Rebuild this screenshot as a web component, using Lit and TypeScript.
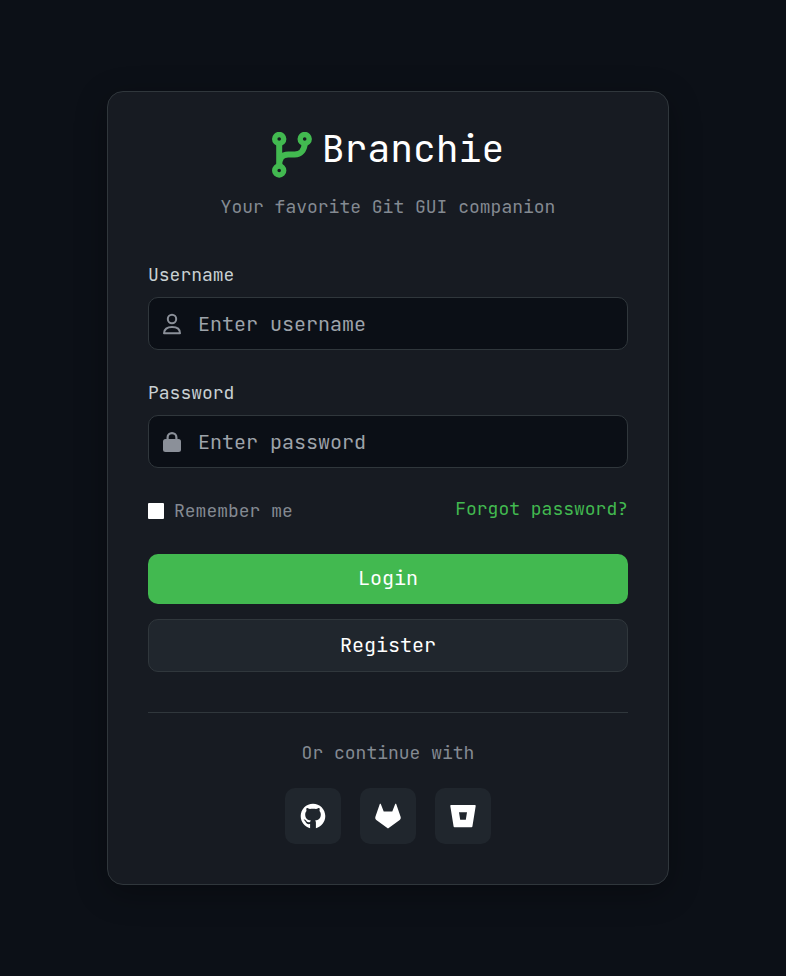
import { LitElement, html, css, svg } from "lit";
import { customElement } from "lit/decorators.js";

const branchIcon = svg`<svg class="logo" viewBox="0 0 40 46" fill="none" stroke="currentColor" aria-hidden="true">
  <g stroke-width="5.400"><circle cx="7.200" cy="7" r="4.500"/><circle cx="32.700" cy="7" r="4.500"/><circle cx="7.200" cy="38.500" r="4.500"/></g>
  <path stroke-width="6" d="M7.200 11.500V34M7.200 34c0-8 3-11.500 9-11.500h6.500c6 0 9.500-4.500 10-10.500"/>
</svg>`;

const userIcon = svg`<svg class="field-icon" viewBox="0 0 20 22" fill="none" stroke="currentColor" stroke-width="2" aria-hidden="true">
  <circle cx="10" cy="6" r="4.200"/>
  <path stroke-linejoin="round" d="M2 20.300c0-4 3.200-6.300 8-6.300s8 2.300 8 6.300z"/>
</svg>`;

const lockIcon = svg`<svg class="field-icon" viewBox="0 0 20 22" aria-hidden="true">
  <rect x="1" y="8" width="18" height="13" rx="2.500" fill="currentColor"/>
  <path fill="none" stroke="currentColor" stroke-width="2.200" d="M5.600 9.500V6.500a4.400 4.400 0 0 1 8.800 0V9.500"/>
</svg>`;

const githubIcon = svg`<svg viewBox="0 0 26 26" aria-hidden="true">
  <path fill="currentColor" fill-rule="evenodd" d="M10.100 25.200C4.700 23.900.7 19 .7 13.100.7 6.200 6.200.7 13 .7s12.300 5.500 12.300 12.400c0 5.900-4 10.800-9.400 12.100v-5.400c0-1.200-.3-1.900-.8-2.400 3.600-.4 5.700-2.100 5.700-6 0-1.600-.5-2.700-1.300-3.500.3-1 .3-2-.1-3-1.300 0-2.500.6-3.300 1.200-2-.5-4.200-.5-6.200 0-.8-.6-2-1.200-3.300-1.200-.4 1-.4 2-.1 3-.8.800-1.300 1.900-1.300 3.500 0 3.900 2.100 5.600 5.700 6-.4.400-.7.900-.8 1.600-2.500.9-3.400-.5-4.100-1.500-.5-.7-1.100-1.100-1.900-1-.6.100-.3.500.1.700.7.400 1 .9 1.400 1.800.6 1.500 2 2.600 4.500 2.100z"/>
</svg>`;

const gitlabIcon = svg`<svg viewBox="0 0 26 26" fill="currentColor" aria-hidden="true">
  <path d="M13 25.500 1.300 17C.3 16.200 0 15 .4 13.800L4.700 1.200c.2-.6 1-.6 1.200 0L8.700 8.600h8.600l2.800-7.400c.2-.6 1-.6 1.200 0l4.300 12.600c.4 1.200.1 2.400-.9 3.200z"/>
</svg>`;

const bitbucketIcon = svg`<svg viewBox="0 0 26 26" fill="currentColor" aria-hidden="true">
  <path fill-rule="evenodd" d="M1 2h24c.5 0 .8.400.7.900L22.400 23.400c-.1.500-.4.800-.9.800h-17c-.5 0-.8-.3-.9-.8L.3 2.900C.2 2.400.5 2 1 2zM9 9.300 10.200 16.800h5.600L17 9.300z"/>
</svg>`;

const providers = [
  { name: "GitHub", icon: githubIcon },
  { name: "GitLab", icon: gitlabIcon },
  { name: "Bitbucket", icon: bitbucketIcon },
];

@customElement("app-root")
export class AppRoot extends LitElement {
  static styles = css`
    :host {
      display: flex;
      align-items: center;
      justify-content: center;
      min-height: 100vh;
      box-sizing: border-box;
      padding: 40px 30px 40px 20px;
      background: #0c1017;
      color: #fff;
      font: 18px/24px "JetBrains Mono", "DejaVu Sans Mono", monospace;
    }
    * { box-sizing: border-box; }
    .card {
      width: 100%;
      max-width: 562px;
      padding: 40px;
      border: 1px solid #30373c;
      border-radius: 16px;
      background: #171b22;
      box-shadow: 0 8px 32px rgba(0, 0, 0, 0.3);
    }
    header { text-align: center; margin-bottom: 46px; }
    .brand { display: flex; justify-content: center; gap: 10px; }
    .logo { width: 40px; height: 46px; color: #42b950; }
    h1 { margin: 0; font-size: 38px; line-height: 32px; font-weight: 400; }
    p { margin: 0; color: #848a92; }
    .tagline { margin-top: 17px; }
    .field { display: flex; flex-direction: column; gap: 12px; margin-bottom: 33px; }
    .field label { line-height: 20px; color: #c9d1d4; }
    .box {
      display: flex;
      align-items: center;
      gap: 16px;
      height: 53px;
      padding: 0 13px;
      border: 1px solid #30373c;
      border-radius: 10px;
      background: #0b0f16;
      color: #8b9099;
    }
    .box:focus-within { border-color: #42b950; }
    .field-icon { flex: none; width: 20px; height: 22px; }
    .box input {
      flex: 1;
      min-width: 0;
      padding: 0;
      border: 0;
      outline: 0;
      background: transparent;
      color: #fff;
      font: inherit;
      font-size: 20px;
    }
    .box input::placeholder { color: #9ea3aa; opacity: 1; }
    .options {
      display: flex;
      justify-content: space-between;
      align-items: flex-start;
      margin: -4px 0 29px;
    }
    .remember { display: flex; align-items: center; gap: 10px; height: 28px; color: #848a92; }
    .remember input {
      appearance: none;
      width: 16px;
      height: 16px;
      margin: 0;
      border: 0;
      border-radius: 1px;
      background: #fff;
    }
    .remember input:checked { background: #42b950; }
    a { color: #42b950; text-decoration: none; }
    button { font: inherit; color: #fff; cursor: pointer; padding: 0; border: 0; }
    .actions { display: flex; flex-direction: column; gap: 15px; }
    .actions button { padding-bottom: 2px; border-radius: 10px; font-size: 20px; }
    .login { height: 50px; background: #42b950; }
    .actions .register { height: 53px; border: 1px solid #30373c; background: #20262d; }
    footer {
      margin-top: 40px;
      padding-top: 28px;
      border-top: 1px solid #30373c;
      text-align: center;
    }
    .providers { display: flex; justify-content: center; gap: 19px; margin-top: 23px; }
    .providers button {
      display: grid;
      place-items: center;
      width: 56px;
      height: 56px;
      border-radius: 10px;
      background: #20262d;
    }
    .providers svg { width: 26px; height: 26px; }
  `;

  render() {
    return html`
      <main class="card">
        <header>
          <div class="brand">${branchIcon}<h1>Branchie</h1></div>
          <p class="tagline">Your favorite Git GUI companion</p>
        </header>
        <form @submit=${(e: Event) => e.preventDefault()}>
          <div class="field">
            <label for="username">Username</label>
            <div class="box">${userIcon}<input id="username" type="text" placeholder="Enter username" /></div>
          </div>
          <div class="field">
            <label for="password">Password</label>
            <div class="box">${lockIcon}<input id="password" type="password" placeholder="Enter password" /></div>
          </div>
          <div class="options">
            <label class="remember"><input type="checkbox" />Remember me</label>
            <a href="#">Forgot password?</a>
          </div>
          <div class="actions">
            <button class="login" type="submit">Login</button>
            <button class="register" type="button">Register</button>
          </div>
        </form>
        <footer>
          <p>Or continue with</p>
          <div class="providers">
            ${providers.map((p) => html`<button type="button" aria-label=${p.name}>${p.icon}</button>`)}
          </div>
        </footer>
      </main>
    `;
  }
}
